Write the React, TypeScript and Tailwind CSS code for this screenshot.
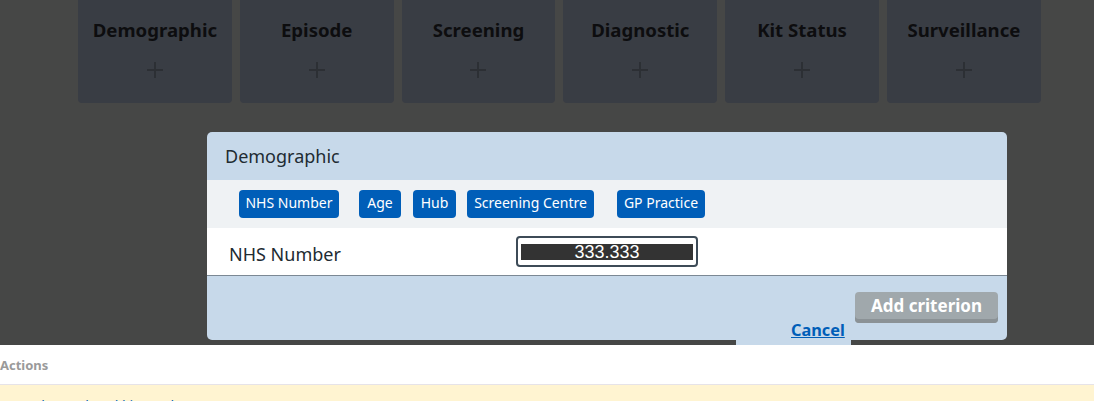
import React from 'react'

const tiles = ['Demographic', 'Episode', 'Screening', 'Diagnostic', 'Kit Status', 'Surveillance']

const fields = [
  { label: 'NHS Number', w: 'w-[100px]', ml: 'ml-[32px]' },
  { label: 'Age', w: 'w-[42px]', ml: 'ml-[20px]' },
  { label: 'Hub', w: 'w-[43px]', ml: 'ml-[12px]' },
  { label: 'Screening Centre', w: 'w-[127px]', ml: 'ml-[11px]' },
  { label: 'GP Practice', w: 'w-[88px]', ml: 'ml-[23px]' },
]

function Plus() {
  return (
    <svg width="18" height="18" viewBox="0 0 18 18" className="text-[#2c2f34]">
      <path d="M9 1v16M1 9h16" stroke="currentColor" strokeWidth="1.8" />
    </svg>
  )
}

export default function App() {
  return (
    <div className="w-[1094px] h-[402px] overflow-hidden bg-white font-['Noto_Sans',sans-serif]">
      <div className="relative h-[345px] bg-[#464746]">
        {/* criteria tiles behind the overlay */}
        <div className="flex gap-[8px] pl-[78px]">
          {tiles.map((t) => (
            <div key={t} className="w-[153.8px] h-[103px] rounded-b-[4px] bg-[#393d44] flex flex-col items-center">
              <div className="mt-[17px] text-[18.6px] leading-[26px] font-bold text-[#0d0d0f]">{t}</div>
              <div className="mt-[18px]">
                <Plus />
              </div>
            </div>
          ))}
        </div>

        {/* criterion dialog */}
        <div className="absolute left-[207px] top-[132px] w-[800px]">
          <div className="h-[48px] rounded-t-[5px] bg-[#c7d9ea] flex items-center pl-[18px] text-[18px] text-[#212b32]">Demographic</div>
          <div className="h-[48px] bg-[#eff2f4] flex items-center">
            {fields.map((f) => (
              <button
                key={f.label}
                className={`${f.w} ${f.ml} h-[28px] rounded-[4px] bg-[#005eb8] text-white text-[14px] leading-[20px] pb-[3px] flex items-center justify-center whitespace-nowrap`}
              >
                {f.label}
              </button>
            ))}
          </div>
          <div className="h-[48px] bg-white border-b border-[#7b8894] flex items-center">
            <div className="w-[309px] pl-[22px] text-[18px] text-[#212b32] pt-[6px]">NHS Number</div>
            <div className="w-[182px] h-[31px] border-2 border-[#3d4b57] rounded-[4px] flex items-center justify-center">
              <span className="w-[172px] h-[16px] bg-[#333333] text-white text-[18px] leading-[16px] text-center font-['Liberation_Sans',sans-serif]">
                333.333
              </span>
            </div>
          </div>
          <div className="h-[64px] rounded-b-[5px] bg-[#c7d9ea] relative">
            <button className="absolute right-[9px] top-[16px] w-[143px] h-[31px] rounded-[4px] bg-[#a0a8ac] shadow-[inset_0_-4px_0_#8b9296] text-white font-bold text-[17px] pb-[3px]">
              Add criterion
            </button>
            <a href="#" className="absolute left-[584px] top-[44px] text-[16.3px] font-bold leading-[20px] text-[#005eb8] underline">
              Cancel
            </a>
          </div>
        </div>
        <div className="absolute left-[736px] top-[338px] w-[115px] h-[7px] bg-[#c7d9ea]" />
      </div>

      {/* page below */}
      <div className="h-[40px] border-b border-[#e6e3e8] flex items-center pt-[3px]">
        <span className="text-[13px] font-bold text-[#9a9a9a]">Actions</span>
      </div>
      <div className="h-[16px] bg-[#fff4d1] pl-[12px] pt-[11px] text-[14px] text-[#005eb8] leading-[20px] overflow-hidden">
        Send completed kit results
      </div>
    </div>
  )
}
